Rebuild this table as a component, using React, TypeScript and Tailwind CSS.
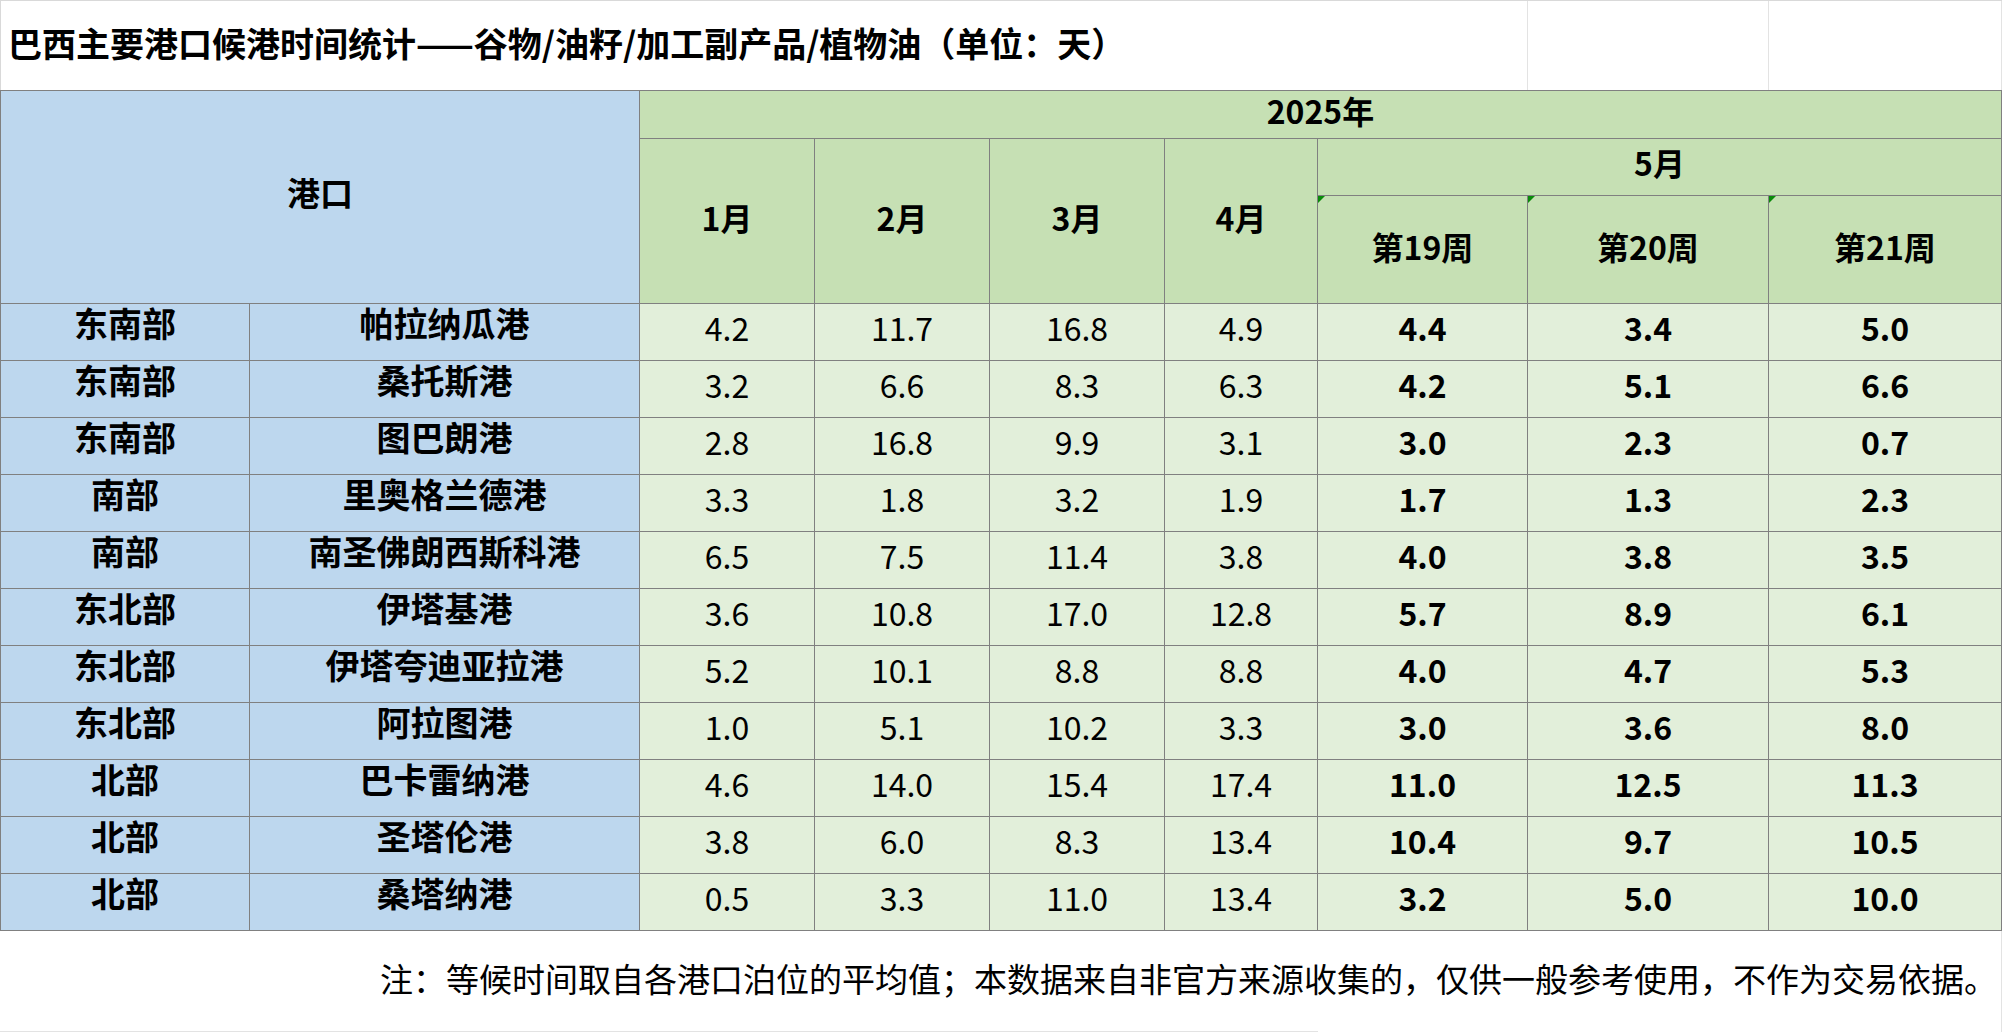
import React from "react";

const rows: [string, string, string[], string[]][] = [
  ["东南部", "帕拉纳瓜港", ["4.2", "11.7", "16.8", "4.9"], ["4.4", "3.4", "5.0"]],
  ["东南部", "桑托斯港", ["3.2", "6.6", "8.3", "6.3"], ["4.2", "5.1", "6.6"]],
  ["东南部", "图巴朗港", ["2.8", "16.8", "9.9", "3.1"], ["3.0", "2.3", "0.7"]],
  ["南部", "里奥格兰德港", ["3.3", "1.8", "3.2", "1.9"], ["1.7", "1.3", "2.3"]],
  ["南部", "南圣佛朗西斯科港", ["6.5", "7.5", "11.4", "3.8"], ["4.0", "3.8", "3.5"]],
  ["东北部", "伊塔基港", ["3.6", "10.8", "17.0", "12.8"], ["5.7", "8.9", "6.1"]],
  ["东北部", "伊塔夸迪亚拉港", ["5.2", "10.1", "8.8", "8.8"], ["4.0", "4.7", "5.3"]],
  ["东北部", "阿拉图港", ["1.0", "5.1", "10.2", "3.3"], ["3.0", "3.6", "8.0"]],
  ["北部", "巴卡雷纳港", ["4.6", "14.0", "15.4", "17.4"], ["11.0", "12.5", "11.3"]],
  ["北部", "圣塔伦港", ["3.8", "6.0", "8.3", "13.4"], ["10.4", "9.7", "10.5"]],
  ["北部", "桑塔纳港", ["0.5", "3.3", "11.0", "13.4"], ["3.2", "5.0", "10.0"]],
];

const cell = "flex items-center justify-center border-r border-b border-[#808080] leading-none";

function Tri() {
  return (
    <span className="absolute left-0 top-0 w-0 h-0 border-t-[7px] border-t-[#0a8a0a] border-r-[7px] border-r-transparent" />
  );
}

export default function App() {
  return (
    <div className="w-[2004px] h-[1033px] bg-white text-black font-['Noto_Sans_CJK_SC','Noto_Sans',sans-serif] text-[32px] overflow-hidden">
      {/* Title row */}
      <div className="flex h-[90px] w-[2002px] border-t border-l border-[#d9d9d9]">
        <div className="w-[1527px] h-full flex items-center pl-[7px] font-bold text-[34px] leading-none border-r border-[#e3e3e3]">
          <span className="-translate-y-[3px]">巴西主要港口候港时间统计——谷物/油籽/加工副产品/植物油（单位：天）</span>
        </div>
        <div className="w-[241px] h-full border-r border-[#e3e3e3]" />
        <div className="w-[233px] h-full border-r border-[#e3e3e3]" />
      </div>

      {/* Table */}
      <div className="grid w-[2002px] grid-cols-[249px_390px_175px_175px_175px_153px_210px_241px_233px] grid-rows-[48px_57px_108px_repeat(11,57px)] border-l border-t border-[#808080]">
        <div className={`${cell} col-start-1 col-span-2 row-start-1 row-span-3 bg-[#BDD7EE] font-bold text-[33px]`}>
          <span className="-translate-y-[5px]">港口</span>
        </div>
        <div className={`${cell} col-start-3 col-span-7 row-start-1 bg-[#C6E0B4] font-bold`}>
          <span className="-translate-y-[5px]">2025年</span>
        </div>
        {["1月", "2月", "3月", "4月"].map((m, i) => (
          <div
            key={m}
            className={`${cell} row-start-2 row-span-2 bg-[#C6E0B4] font-bold`}
            style={{ gridColumnStart: i + 3 }}
          >
            <span className="-translate-y-[4px]">{m}</span>
          </div>
        ))}
        <div className={`${cell} col-start-7 col-span-3 row-start-2 bg-[#C6E0B4] font-bold`}>
          <span className="-translate-y-[5px]">5月</span>
        </div>
        {["第19周", "第20周", "第21周"].map((w, i) => (
          <div
            key={w}
            className={`${cell} relative row-start-3 bg-[#C6E0B4] font-bold`}
            style={{ gridColumnStart: i + 7 }}
          >
            <Tri />
            <span className="-translate-y-[4px]">{w}</span>
          </div>
        ))}
        {rows.map(([region, port, months, weeks], r) => (
          <React.Fragment key={r}>
            <div className={`${cell} bg-[#BDD7EE] font-bold text-[34px]`}>
              <span className="-translate-y-[9px]">{region}</span>
            </div>
            <div className={`${cell} bg-[#BDD7EE] font-bold text-[34px]`}>
              <span className="-translate-y-[9px]">{port}</span>
            </div>
            {months.map((v, i) => (
              <div key={"m" + i} className={`${cell} bg-[#E2EFDA]`}>
                <span className="-translate-y-[5px]">{v}</span>
              </div>
            ))}
            {weeks.map((v, i) => (
              <div key={"w" + i} className={`${cell} bg-[#E2EFDA] font-bold`}>
                <span className="-translate-y-[5px]">{v}</span>
              </div>
            ))}
          </React.Fragment>
        ))}
      </div>

      {/* Footer */}
      <div className="flex w-[2002px] h-[101px]">
        <div className="w-[1318px] h-full border-b border-[#e3e3e3]" />
        <div className="flex-1 h-full border-r border-[#e3e3e3]" />
      </div>
      <div className="relative -mt-[101px] h-[101px] w-[2002px] flex items-center justify-end pr-[5px] text-[33px] leading-none">
        <span className="-translate-y-[3px]">注：等候时间取自各港口泊位的平均值；本数据来自非官方来源收集的，仅供一般参考使用，不作为交易依据。</span>
      </div>
    </div>
  );
}
